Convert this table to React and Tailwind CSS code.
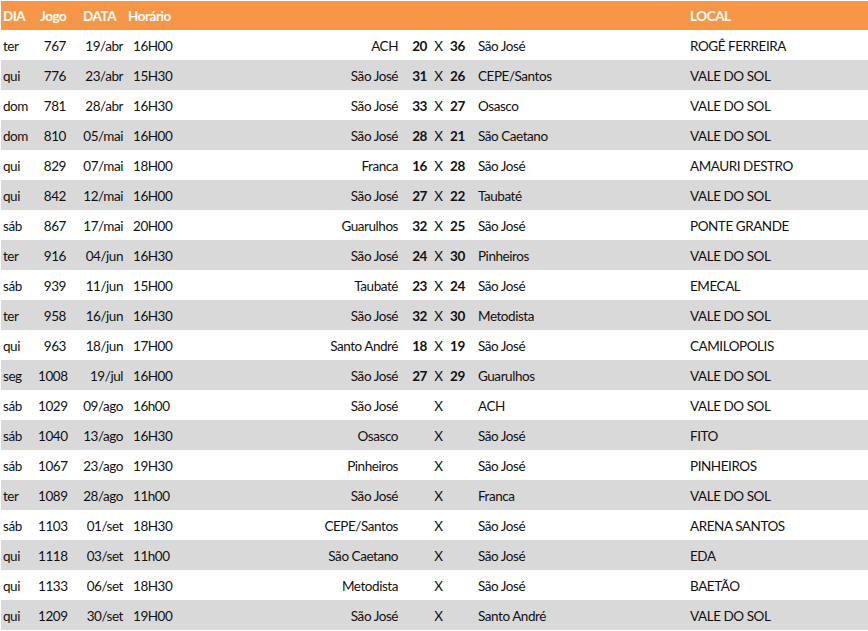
// App.jsx
const jogos = [
  ['ter', '767', '19/abr', '16H00', 'ACH', '20', '36', 'São José', 'ROGÊ FERREIRA'],
  ['qui', '776', '23/abr', '15H30', 'São José', '31', '26', 'CEPE/Santos', 'VALE DO SOL'],
  ['dom', '781', '28/abr', '16H30', 'São José', '33', '27', 'Osasco', 'VALE DO SOL'],
  ['dom', '810', '05/mai', '16H00', 'São José', '28', '21', 'São Caetano', 'VALE DO SOL'],
  ['qui', '829', '07/mai', '18H00', 'Franca', '16', '28', 'São José', 'AMAURI DESTRO'],
  ['qui', '842', '12/mai', '16H00', 'São José', '27', '22', 'Taubaté', 'VALE DO SOL'],
  ['sáb', '867', '17/mai', '20H00', 'Guarulhos', '32', '25', 'São José', 'PONTE GRANDE'],
  ['ter', '916', '04/jun', '16H30', 'São José', '24', '30', 'Pinheiros', 'VALE DO SOL'],
  ['sáb', '939', '11/jun', '15H00', 'Taubaté', '23', '24', 'São José', 'EMECAL'],
  ['ter', '958', '16/jun', '16H30', 'São José', '32', '30', 'Metodista', 'VALE DO SOL'],
  ['qui', '963', '18/jun', '17H00', 'Santo André', '18', '19', 'São José', 'CAMILOPOLIS'],
  ['seg', '1008', '19/jul', '16H00', 'São José', '27', '29', 'Guarulhos', 'VALE DO SOL'],
  ['sáb', '1029', '09/ago', '16h00', 'São José', '', '', 'ACH', 'VALE DO SOL'],
  ['sáb', '1040', '13/ago', '16H30', 'Osasco', '', '', 'São José', 'FITO'],
  ['sáb', '1067', '23/ago', '19H30', 'Pinheiros', '', '', 'São José', 'PINHEIROS'],
  ['ter', '1089', '28/ago', '11h00', 'São José', '', '', 'Franca', 'VALE DO SOL'],
  ['sáb', '1103', '01/set', '18H30', 'CEPE/Santos', '', '', 'São José', 'ARENA SANTOS'],
  ['qui', '1118', '03/set', '11h00', 'São Caetano', '', '', 'São José', 'EDA'],
  ['qui', '1133', '06/set', '18H30', 'Metodista', '', '', 'São José', 'BAETÃO'],
  ['qui', '1209', '30/set', '19H00', 'São José', '', '', 'Santo André', 'VALE DO SOL'],
]

// column edges taken from the sheet: 38 | 66 | 123 | 180 | 398 | 427 | 450 | 478 | 690
const cols = 'grid grid-cols-[37px_28px_57px_57px_218px_29px_23px_28px_212px_178px]'

function Row({ r, i }) {
  const [dia, jogo, data, hora, casa, g1, g2, fora, local] = r
  return (
    <div className={`${cols} h-[30px] items-center pt-[2px] ${i % 2 ? 'bg-[#d9d9d9]' : 'bg-white'}`}>
      <span className="pl-[2px]">{dia}</span>
      <span className="text-right">{jogo}</span>
      <span className="text-right">{data}</span>
      <span className="pl-[10px]">{hora}</span>
      <span className="text-right">{casa}</span>
      <span className="text-right font-bold">{g1}</span>
      <span className="text-center">X</span>
      <span className="font-bold">{g2}</span>
      <span>{fora}</span>
      <span>{local}</span>
    </div>
  )
}

export default function App() {
  return (
    <div className="w-[868px] h-[631px] bg-white pt-[1px] pl-[1px] overflow-hidden
                    text-[13.5px] tracking-[-0.45px] text-[#111] whitespace-nowrap
                    font-['Lato','Open_Sans',sans-serif]">
      <div className={`${cols} h-[29px] items-center pt-[1px] bg-[#f79646] text-white font-bold`}>
        <span className="pl-[2px]">DIA</span>
        <span className="pl-[2px]">Jogo</span>
        <span className="pl-[17px]">DATA</span>
        <span className="pl-[5px]">Horário</span>
        <span />
        <span />
        <span />
        <span />
        <span />
        <span>LOCAL</span>
      </div>
      {jogos.map((r, i) => <Row key={r[1]} r={r} i={i} />)}
    </div>
  )
}
